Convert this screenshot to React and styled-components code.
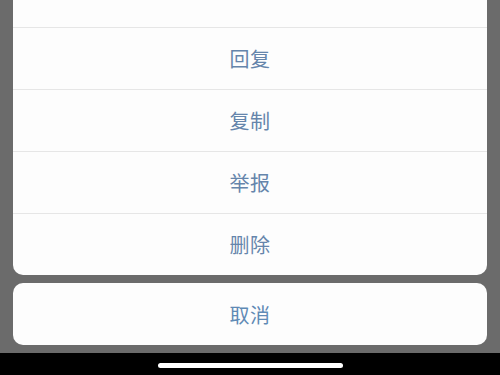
import React from "react";
import styled, { createGlobalStyle } from "styled-components";

const Global = createGlobalStyle`
  html, body { margin: 0; padding: 0; background: #6b6b6b; }
  body { font-family: "Noto Sans CJK SC", "Noto Sans", sans-serif; }
`;

const Screen = styled.div`
  width: 500px;
  height: 375px;
  display: flex;
  flex-direction: column;
  overflow: hidden;
  background: #6b6b6b;
`;

const Sheet = styled.div`
  flex: 1;
  display: flex;
  flex-direction: column;
  justify-content: flex-end;
  gap: 8px;
  padding: 0 13px 8px;
  overflow: hidden;
`;

const Card = styled.div`
  background: #fdfdfd;
  border-radius: 10px;
  overflow: hidden;
  flex-shrink: 0;
`;

const Row = styled.div`
  height: ${(p) => p.$h || 61}px;
  display: flex;
  align-items: center;
  justify-content: center;
  border-top: ${(p) => (p.$first ? "none" : "1px solid #e6e6e6")};
  color: ${(p) => p.$color || "#6585ab"};
  font-size: 20px;
  letter-spacing: 0.5px;
`;

const HomeBar = styled.div`
  height: 22px;
  background: #000;
  display: flex;
  justify-content: center;
  align-items: flex-start;
  padding-top: 10px;
  box-sizing: border-box;
`;

const Indicator = styled.div`
  width: 185px;
  height: 5px;
  border-radius: 3px;
  background: #fff;
`;

const actions = ["回复", "复制", "举报", "删除"];

export default function App() {
  return (
    <>
      <Global />
      <Screen>
        <Sheet>
          <Card>
            <Row $first $h={61} />
            {actions.map((a) => (
              <Row key={a}>{a}</Row>
            ))}
          </Card>
          <Card>
            <Row $first $h={62} $color="#5f8ab5">取消</Row>
          </Card>
        </Sheet>
        <HomeBar>
          <Indicator />
        </HomeBar>
      </Screen>
    </>
  );
}
